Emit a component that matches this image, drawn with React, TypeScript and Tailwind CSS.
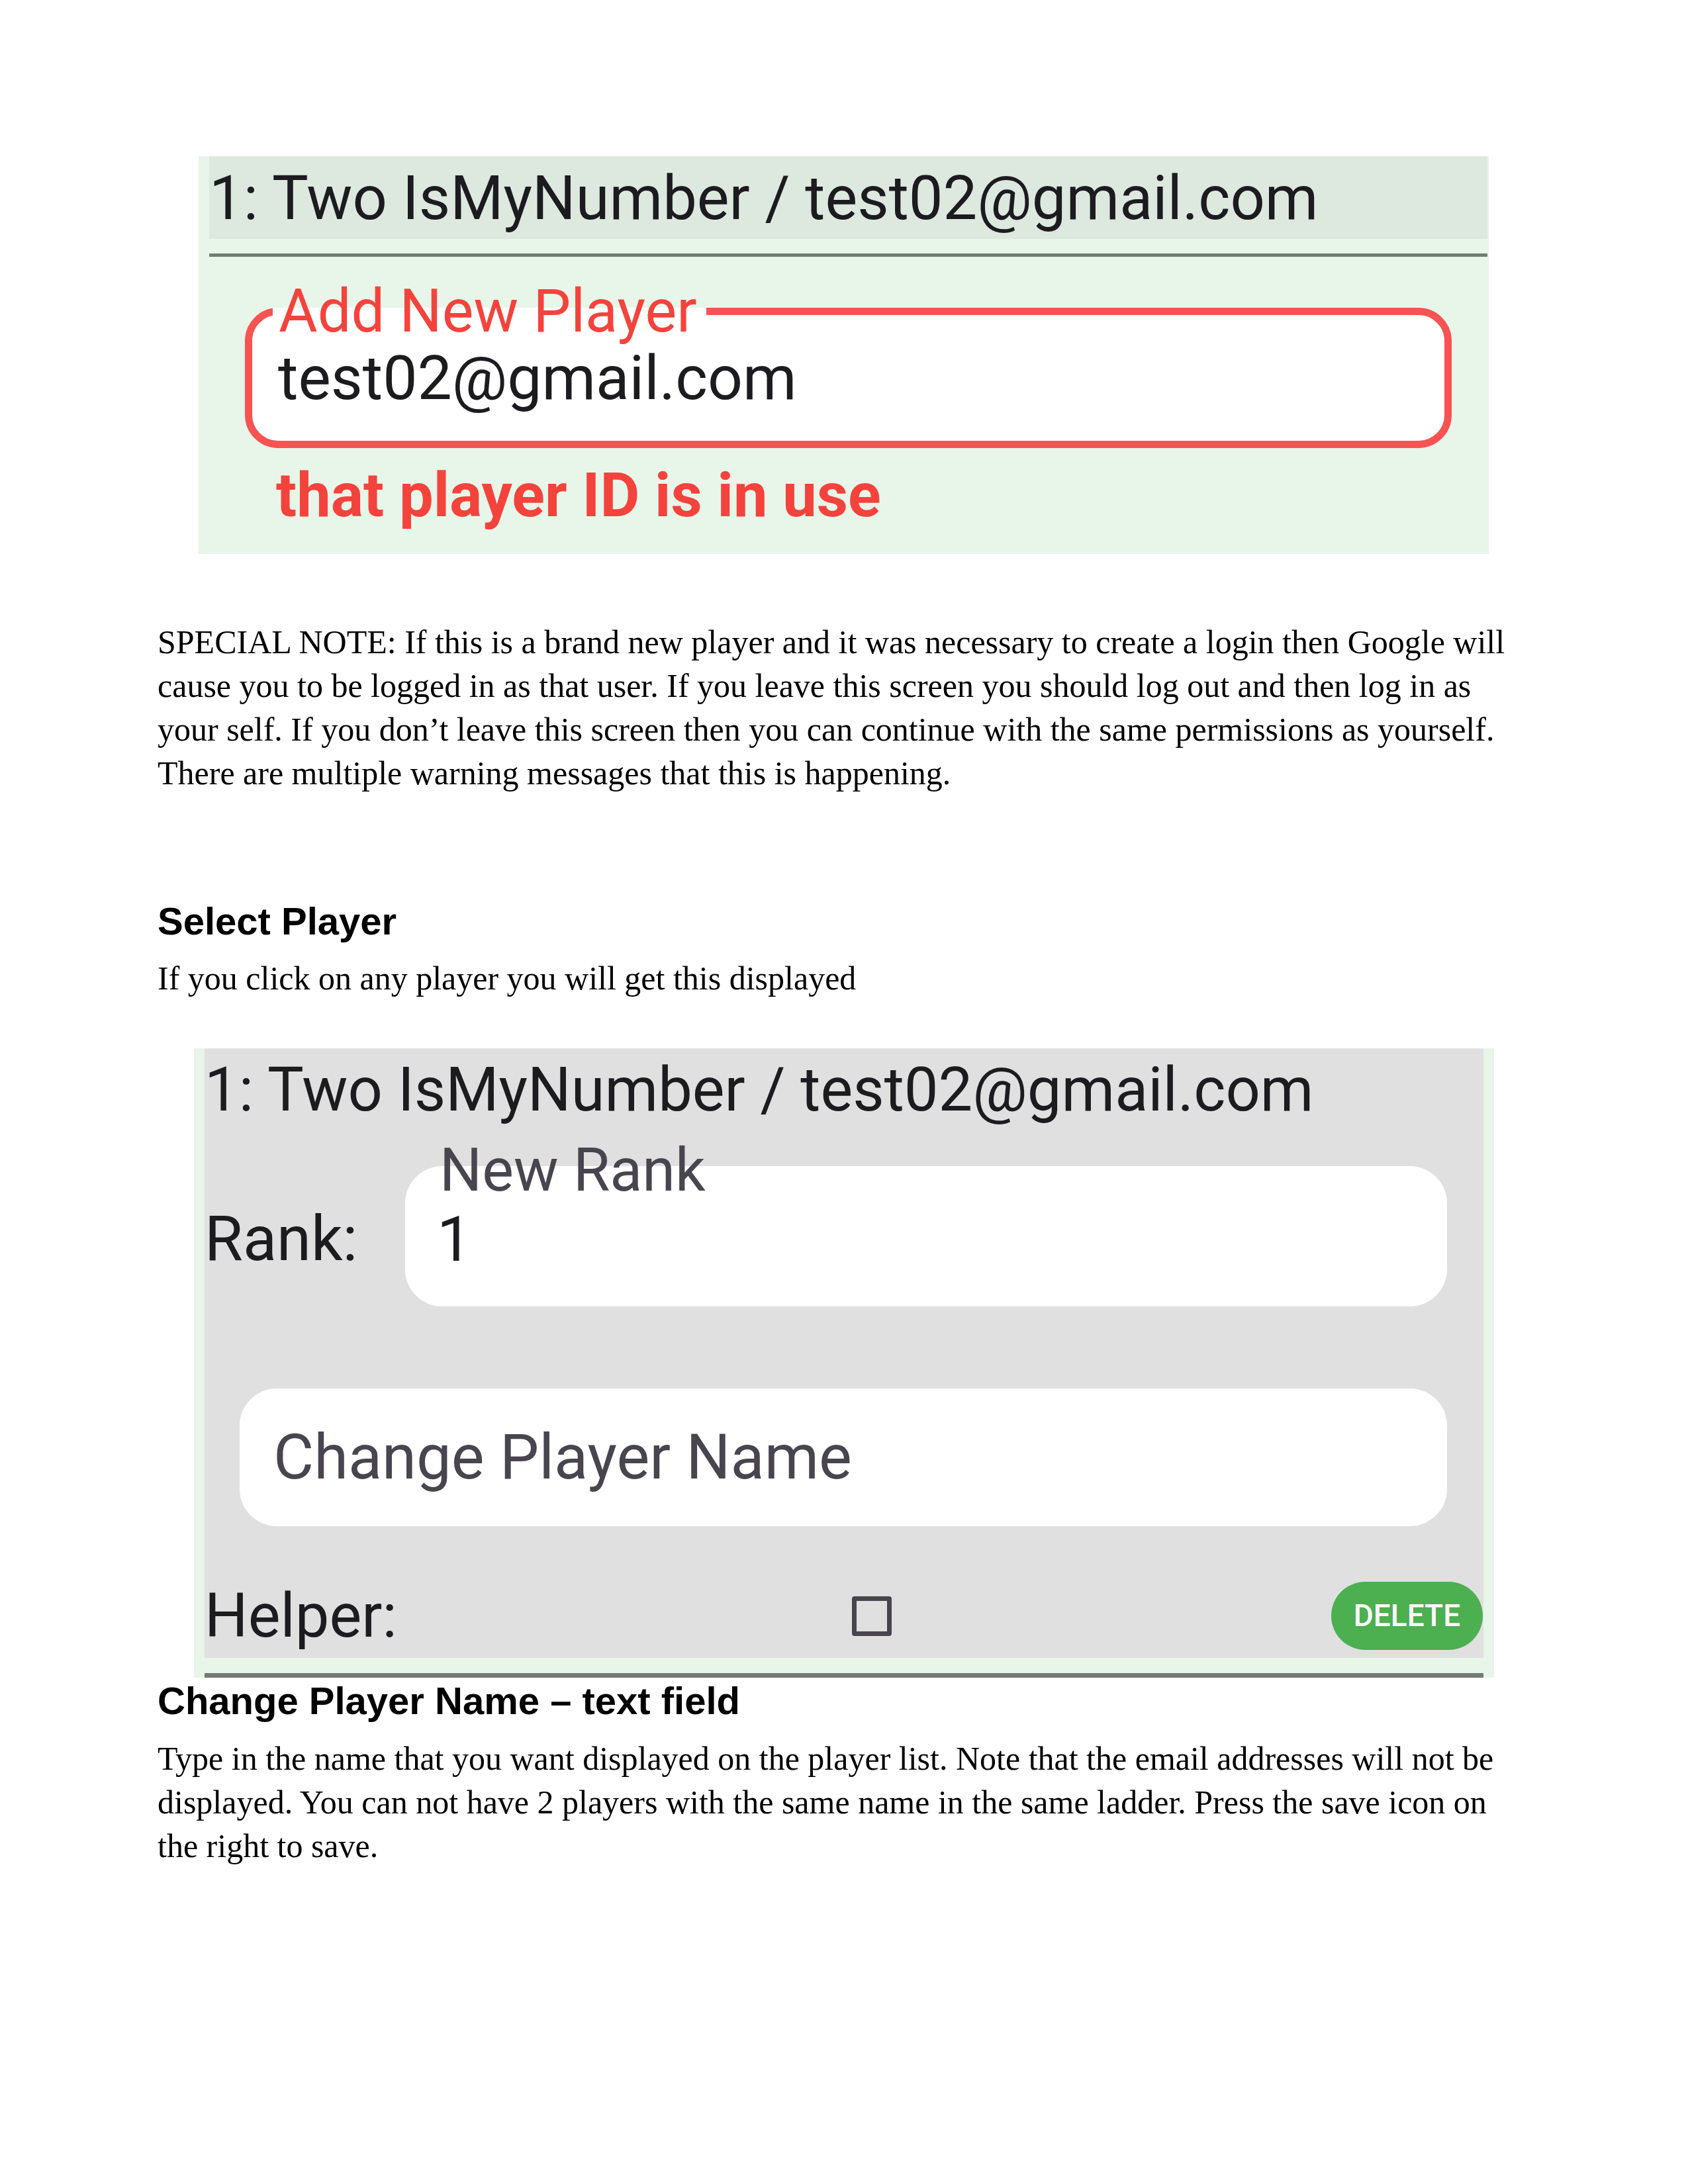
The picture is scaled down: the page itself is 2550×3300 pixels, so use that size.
import React from "react";

const serif = "font-['Liberation_Serif',serif] text-[50px] leading-[66px] text-black";
const heading = "font-['Liberation_Sans',sans-serif] font-bold text-[58px] leading-[65px] text-black";
const ui = "font-['Roboto',sans-serif]";

export default function App() {
  return (
    <div className="w-[2550px] min-h-[3300px] bg-white pt-[236px] pl-[238px]">
      {/* Screenshot 1: Add new player with error */}
      <div className={`${ui} ml-[62px] w-[1949px] h-[601px] bg-[#e8f5e9] flex flex-col pl-[16px] pr-[2px]`}>
        <div className="h-[125px] bg-[#dde8df] pt-[10px] text-[92px] leading-[107px] text-[#1c1b1f] whitespace-nowrap">
          1: Two IsMyNumber / test02@gmail.com
        </div>
        <div className="mt-[22px] h-[5px] bg-[#747b74]" />
        <fieldset className="mt-[29px] mx-[54px] border-[11px] border-[#f65353] rounded-[50px] bg-white pl-[31px] pb-[47px]">
          <legend className="pl-[9px] pr-[14px] text-[90px] leading-[107px] text-[#f4433c] whitespace-nowrap">
            Add New Player
          </legend>
          <div className="pl-[8px] text-[93px] leading-[95px] text-[#1c1b1f]">test02@gmail.com</div>
        </fieldset>
        <div className="mt-[18px] ml-[101px] text-[92px] leading-[108px] font-bold text-[#f4433c] whitespace-nowrap">
          that player ID is in use
        </div>
      </div>

      {/* Special note */}
      <p className={`${serif} mt-[100px] w-[2074px]`}>
        SPECIAL NOTE: If this is a brand new player and it was necessary to create a login then Google will cause you to be logged in as that user. If you leave this screen you should log out and then log in as your self. If you don’t leave this screen then you can continue with the same permissions as yourself. There are multiple warning messages that this is happening.
      </p>

      <h2 className={`${heading} mt-[158px]`}>Select Player</h2>
      <p className={`${serif} mt-[21px] w-[2074px]`}>If you click on any player you will get this displayed</p>

      {/* Screenshot 2: Selected player */}
      <div className={`${ui} mt-[73px] ml-[55px] w-[1964px] h-[951px] bg-[#e8f5e9] flex flex-col px-[16px]`}>
        <div className="h-[921px] bg-[#e0e0e0] flex flex-col pt-[9px] pb-[12px]">
          <div className="text-[92px] leading-[107px] text-[#1c1b1f] whitespace-nowrap">
            1: Two IsMyNumber / test02@gmail.com
          </div>

          <div className="mt-[62px] flex items-start">
            <div className="w-[303px] mt-[57px] text-[94px] leading-[107px] text-[#1c1b1f]">Rank:</div>
            <div className="relative flex-1 mr-[55px] h-[212px] rounded-[56px] bg-white">
              <div className="absolute top-[-47px] left-[52px] text-[90px] leading-[107px] text-[#49454f] whitespace-nowrap">
                New Rank
              </div>
              <div className="pt-[58px] pl-[48px] text-[94px] leading-[107px] text-[#1c1b1f]">1</div>
            </div>
          </div>

          <div className="mt-[124px] ml-[53px] mr-[55px] h-[208px] rounded-[56px] bg-white flex items-center pl-[51px]">
            <span className="text-[94px] leading-[107px] text-[#49454f]">Change Player Name</span>
          </div>

          <div className="mt-[84px] h-[103px] flex items-center">
            <div className="w-[978px] text-[92px] leading-[107px] text-[#1c1b1f]">Helper:</div>
            <div className="w-[60px] h-[60px] border-[7px] border-[#49454f] rounded-[4px]" />
            <div className="flex-1" />
            <div className="mr-[1px] w-[229px] h-[103px] rounded-full bg-[#4caf50] flex items-center justify-center text-white text-[46px] font-medium">
              DELETE
            </div>
          </div>
        </div>
        <div className="mt-[23px] h-[7px] bg-[#747b74]" />
      </div>

      <h2 className={`${heading} mt-[2px]`}>Change Player Name – text field</h2>
      <p className={`${serif} mt-[22px] w-[2074px]`}>
        Type in the name that you want displayed on the player list. Note that the email addresses will not be displayed. You can not have 2 players with the same name in the same ladder. Press the save icon on the right to save.
      </p>
    </div>
  );
}
